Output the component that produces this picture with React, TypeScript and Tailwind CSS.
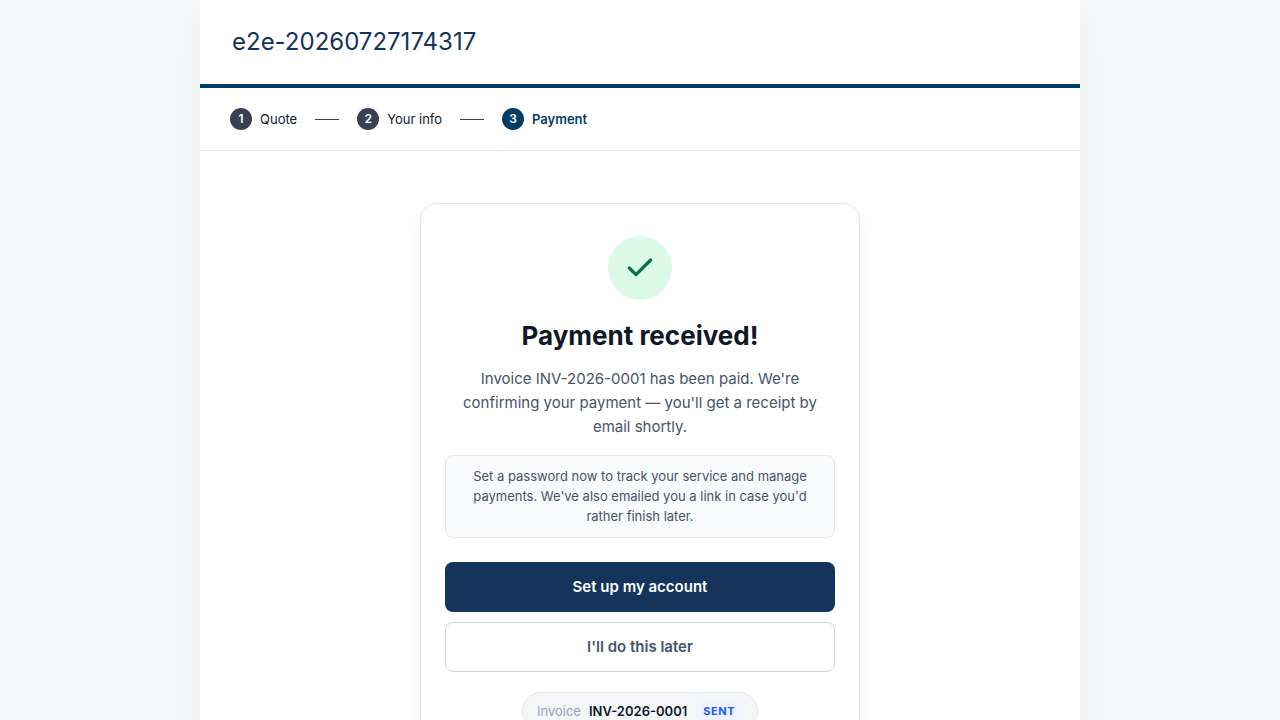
import { Fragment } from 'react';
import clsx from 'clsx';

const steps = ['Quote', 'Your info', 'Payment'];
const currentStep = 3;

function Steps() {
  return (
    <nav aria-label="Progress" className="border-b border-[#e5e7eb] px-[30px] py-5">
      <ol className="flex items-center gap-[18px]">
        {steps.map((label, index) => {
          const active = index + 1 === currentStep;
          return (
            <Fragment key={label}>
              {index > 0 && <li aria-hidden="true" className="h-px w-6 bg-[#374151]" />}
              <li
                aria-current={active ? 'step' : undefined}
                className={clsx(
                  'flex items-center gap-2 text-[13px] leading-[19px]',
                  active ? 'font-semibold text-[#053c63]' : 'text-[#111827]'
                )}
              >
                <span
                  className={clsx(
                    'flex size-[22px] items-center justify-center rounded-full text-xs font-semibold text-white',
                    active ? 'bg-[#053c63]' : 'bg-[#374151]'
                  )}
                >
                  {index + 1}
                </span>
                {label}
              </li>
            </Fragment>
          );
        })}
      </ol>
    </nav>
  );
}

function CheckBadge() {
  return (
    <div className="mx-auto flex size-16 items-center justify-center rounded-full bg-[#dcfae6]">
      <svg
        className="size-8"
        viewBox="0 0 24 24"
        fill="none"
        stroke="#067647"
        strokeWidth="2.5"
        strokeLinecap="round"
        strokeLinejoin="round"
        aria-hidden="true"
      >
        <path d="M20 6 9 17l-5-5" />
      </svg>
    </div>
  );
}

export default function App() {
  return (
    <div className="min-h-screen bg-[#f5f7f9] font-[Inter,sans-serif]">
      <div className="mx-auto min-h-screen max-w-[880px] bg-white shadow-[0_10px_40px_rgba(0,0,0,0.04)]">
        <header className="border-b-4 border-[#053c63] px-8 py-6">
          <div className="text-2xl leading-9 text-[#14345c]">e2e-20260727174317</div>
        </header>

        <Steps />

        <main className="px-6 py-[52px]">
          <section className="mx-auto max-w-[440px] rounded-2xl border border-[#e5e7eb] px-6 py-8 text-center shadow-[0_4px_16px_rgba(0,0,0,0.04)]">
            <CheckBadge />
            <h1 className="mt-5 text-[26px] leading-[31px] font-bold text-[#101828]">Payment received!</h1>
            <p className="mt-4 text-[15px] leading-6 text-[#475467]">
              Invoice INV-2026-0001 has been paid. We're confirming your payment — you'll get a receipt by email
              shortly.
            </p>
            <div className="mt-4 rounded-lg border border-[#e4e7ec] bg-[#f9fafb] px-4 pt-2.5 pb-[11px] text-[13px] leading-5 text-[#475467]">
              Set a password now to track your service and manage payments. We've also emailed you a link in case
              you'd rather finish later.
            </div>

            <div className="mt-6 flex flex-col gap-2.5">
              <button type="button" className="h-[50px] rounded-lg bg-[#14345c] text-[15px] font-semibold text-white">
                Set up my account
              </button>
              <button
                type="button"
                className="h-[50px] rounded-lg border border-[#d0d5dd] bg-white text-[15px] font-semibold text-[#475467]"
              >
                I'll do this later
              </button>
            </div>

            <div className="mt-5 inline-flex items-center gap-2 rounded-full border border-[#e4e7ec] bg-[#f4f6f8] px-3.5 py-2 text-[13px] leading-[19px]">
              <span className="text-[#98a2b3]">Invoice</span>
              <span className="font-semibold text-[#101828]">INV-2026-0001</span>
              <span className="rounded-full bg-[#eff4ff] px-2 text-[11px] leading-5 font-bold tracking-wider text-[#155eef]">
                SENT
              </span>
            </div>
          </section>
        </main>
      </div>
    </div>
  );
}
